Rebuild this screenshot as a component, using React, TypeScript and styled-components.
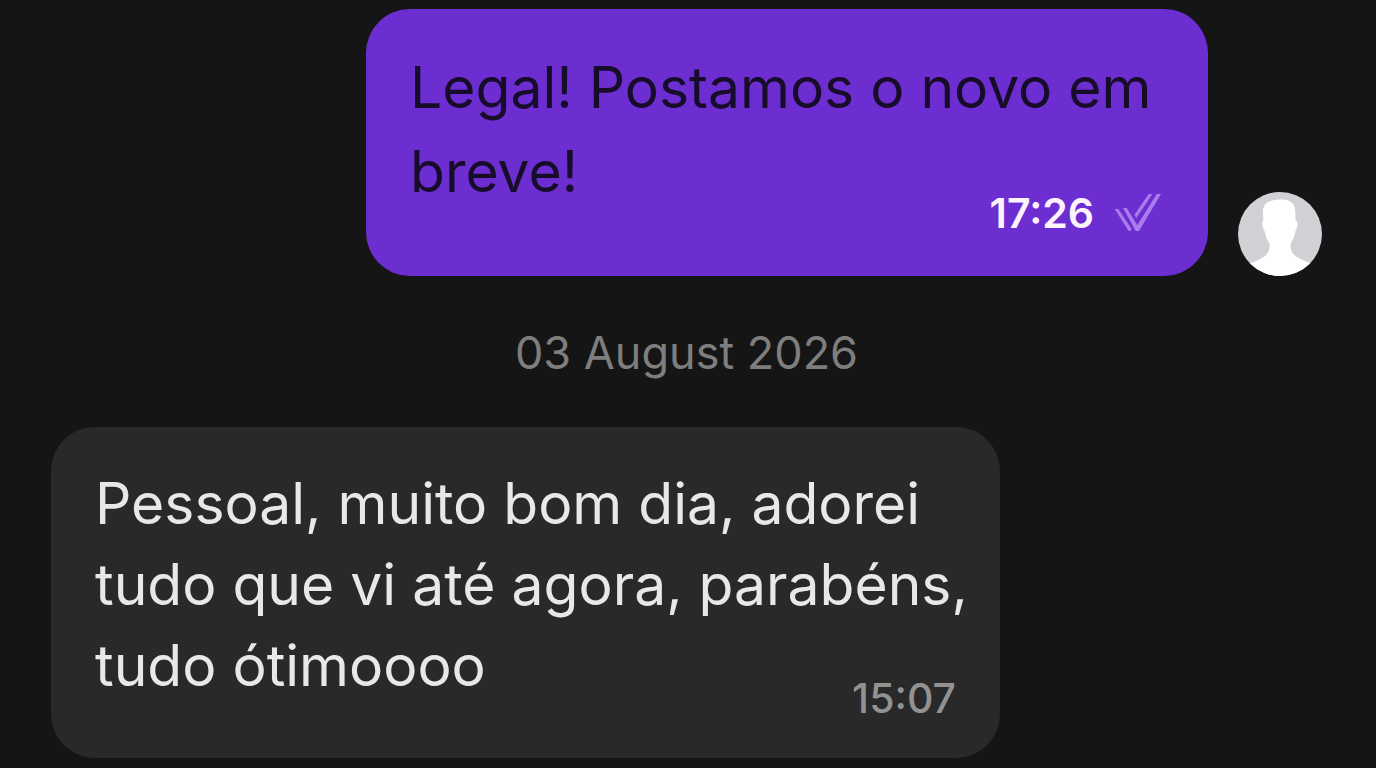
import React from "react";
import styled, { createGlobalStyle } from "styled-components";

const GlobalStyle = createGlobalStyle`
  * { box-sizing: border-box; }
  body {
    margin: 0;
    background: #151515;
    font-family: Inter, "Liberation Sans", sans-serif;
  }
`;

const Thread = styled.main`
  display: flex;
  flex-direction: column;
  padding: 9px 54px 9px 51px;
`;

const MessageRow = styled.article<{ $own?: boolean }>`
  display: flex;
  align-items: flex-end;
  justify-content: ${(p) => (p.$own ? "flex-end" : "flex-start")};
  gap: 30px;
`;

const Bubble = styled.div<{ $own?: boolean }>`
  display: flow-root;
  max-width: ${(p) => (p.$own ? 842 : 949)}px;
  padding: ${(p) => (p.$own ? "37px 32px 39px 44px" : "36px 32px 36px 44px")};
  border-radius: 44px;
  background: ${(p) => (p.$own ? "#6d2ed1" : "#292929")};
  color: ${(p) => (p.$own ? "#180c2b" : "#e8e8e8")};
  font-size: 57px;
  line-height: ${(p) => (p.$own ? 84 : 81)}px;
`;

/* Floats beside the last line of the message when there is room for it. */
const Meta = styled.div<{ $own?: boolean }>`
  float: right;
  display: flex;
  align-items: center;
  gap: 20px;
  margin-top: ${(p) => (p.$own ? 59 : 49)}px;
  padding-right: 12px;
  font-size: 41px;
  font-weight: ${(p) => (p.$own ? 600 : 500)};
  font-feature-settings: "case";
  line-height: 48px;
  color: ${(p) => (p.$own ? "#fdf3ff" : "#929292")};
`;

const DateLabel = styled.time`
  align-self: center;
  margin: 48px 0 46px;
  font-size: 45px;
  line-height: 57px;
  color: #7e7e7e;
`;

const ReadIcon = styled.svg`
  flex: none;
  width: 50px;
  height: 40px;
`;

const AvatarIcon = styled.svg`
  flex: none;
  width: 84px;
  height: 84px;
  border-radius: 50%;
`;

function DoubleCheck() {
  return (
    <ReadIcon viewBox="0 0 50 40" fill="#a87bee" role="img" aria-label="Lida">
      <path d="M0.700 16H4.300L17.700 36L16.300 38H14.700Z" />
      <path d="M9 15H12.700L23.300 32.300L42.700 1H47L25 38H21.700Z" />
      <path d="M34.700 1H38.500L22.200 25L20.300 22Z" />
    </ReadIcon>
  );
}

function Avatar() {
  return (
    <AvatarIcon viewBox="0 0 84 84" role="img" aria-label="Avatar">
      <rect width="84" height="84" fill="#d0d1d5" />
      <path
        fill="#fff"
        d="M42 7.500C48 7 53 9 55 12C57.500 15 57.500 20 57.500 28C60 29 60 35 57.500 39C56.500 45 55 48 52.700 51C52.500 56 53 60 57 63.500C62 67.500 68 69 72 71.500V84H12V71.500C18 69 22 67.500 27 64C31.500 60 32 56 31.500 51C29 48 27.500 45 27 40C24 36 23.500 29 25.500 28C24.500 20 24.500 16 27 12.500C30 9 36 7.500 42 7.500Z"
      />
    </AvatarIcon>
  );
}

export default function App() {
  return (
    <>
      <GlobalStyle />
      <Thread>
        <MessageRow $own>
          <Bubble $own>
            <span>Legal! Postamos o novo em breve!</span>
            <Meta $own>
              <time>17:26</time>
              <DoubleCheck />
            </Meta>
          </Bubble>
          <Avatar />
        </MessageRow>
        <DateLabel dateTime="2026-08-03">03 August 2026</DateLabel>
        <MessageRow>
          <Bubble>
            <span>Pessoal, muito bom dia, adorei tudo que vi até agora, parabéns, tudo ótimoooo</span>
            <Meta>
              <time>15:07</time>
            </Meta>
          </Bubble>
        </MessageRow>
      </Thread>
    </>
  );
}
